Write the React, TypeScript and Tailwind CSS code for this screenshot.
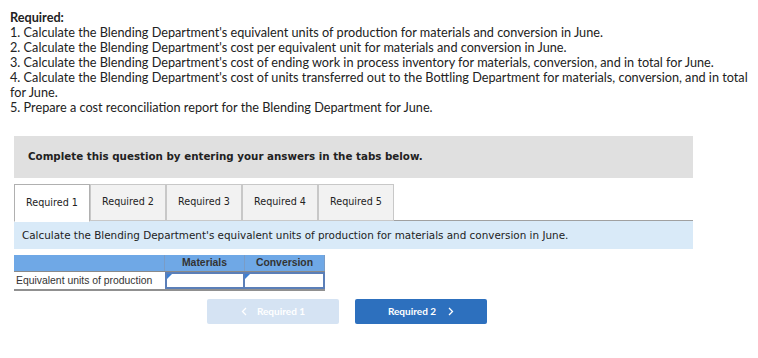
import React from "react";

const lines = [
  "1. Calculate the Blending Department's equivalent units of production for materials and conversion in June.",
  "2. Calculate the Blending Department's cost per equivalent unit for materials and conversion in June.",
  "3. Calculate the Blending Department's cost of ending work in process inventory for materials, conversion, and in total for June.",
  "4. Calculate the Blending Department's cost of units transferred out to the Bottling Department for materials, conversion, and in total for June.",
  "5. Prepare a cost reconciliation report for the Blending Department for June.",
];

const tabs = ["Required 1", "Required 2", "Required 3", "Required 4", "Required 5"];

export default function App() {
  return (
    <div className="w-[758px] h-[358px] bg-white overflow-hidden">
      <div className="pl-[10px] pr-[10px] pt-[10px] text-[12.7px] leading-[15px] text-[#222]" style={{ fontFamily: "Lato, 'Open Sans', sans-serif" }}>
        <div className="font-bold">Required:</div>
        {lines.map((l) => (
          <div key={l}>{l}</div>
        ))}
      </div>
      <div className="ml-[14px] w-[679px]">
        <div
          className="mt-[21px] h-[42px] bg-[#e0e0e0] flex items-center pl-[14px] text-[10.3px] font-bold text-[#222]"
          style={{ fontFamily: "Verdana, 'DejaVu Sans', sans-serif" }}
        >
          Complete this question by entering your answers in the tabs below.
        </div>
        <div className="mt-[6px] flex border-b border-[#a0a0a0] h-[37px]" style={{ fontFamily: "Verdana, 'DejaVu Sans', sans-serif" }}>
          {tabs.map((t, i) => (
            <div
              key={t}
              className={
                i === 0
                  ? "w-[76px] h-[38px] -mb-px bg-white border border-[#b0b0b0] border-b-white flex items-center justify-center text-[9.6px] text-[#222]"
                  : "w-[76px] h-[37px] bg-[#f2f2f2] border border-[#c8c8c8] flex items-center justify-center text-[9.6px] text-[#222]"
              }
            >
              {t}
            </div>
          ))}
        </div>
        <div
          className="h-[28px] bg-[#d9eaf8] flex items-center pl-[8px] pt-[2px] text-[10.4px] text-[#222]"
          style={{ fontFamily: "Verdana, 'DejaVu Sans', sans-serif" }}
        >
          Calculate the Blending Department's equivalent units of production for materials and conversion in June.
        </div>
        <div className="mt-[6px] w-[311px] text-[10.4px]" style={{ fontFamily: "Arial, 'Liberation Sans', sans-serif" }}>
          <div className="flex h-[17px] bg-[#6fa8e6] border-b border-[#8a8a8a]">
            <div className="w-[151px] border-r border-[#7a9cc6]" />
            <div className="w-[80px] border-r border-[#7a9cc6] flex items-center justify-center font-bold text-[#333]">Materials</div>
            <div className="w-[80px] border-r border-[#7a9cc6] flex items-center justify-center font-bold text-[#333]">Conversion</div>
          </div>
          <div className="flex h-[19px] border-b-2 border-[#909090]">
            <div className="w-[151px] pl-[2px] flex items-center text-[#333]">Equivalent units of production</div>
            <div className="relative w-[80px] border-2 border-[#5b7fb8] bg-white">
              <div className="absolute left-0 top-0 w-0 h-0 border-t-[5px] border-t-[#3b7fd4] border-r-[5px] border-r-transparent" />
            </div>
            <div className="relative w-[80px] border-2 border-l-0 border-[#5b7fb8] bg-white">
              <div className="absolute left-0 top-0 w-0 h-0 border-t-[5px] border-t-[#3b7fd4] border-r-[5px] border-r-transparent" />
            </div>
          </div>
        </div>
        <div className="mt-[8px] flex gap-[16px] ml-[193px] text-[10px] font-bold" style={{ fontFamily: "Lato, sans-serif" }}>
          <div className="w-[132px] h-[25px] rounded-[2px] bg-[#d5e3f3] text-white flex items-center justify-center gap-[10px]">
            <svg width="6" height="9" viewBox="0 0 6 9"><path d="M5 1 L1.5 4.5 L5 8" stroke="white" strokeWidth="1.3" fill="none" /></svg>
            <span>Required 1</span>
          </div>
          <div className="w-[132px] h-[25px] rounded-[2px] bg-[#2d70be] text-white flex items-center justify-center gap-[12px]">
            <span>Required 2</span>
            <svg width="6" height="9" viewBox="0 0 6 9"><path d="M1 1 L4.5 4.5 L1 8" stroke="white" strokeWidth="1.3" fill="none" /></svg>
          </div>
        </div>
      </div>
    </div>
  );
}
